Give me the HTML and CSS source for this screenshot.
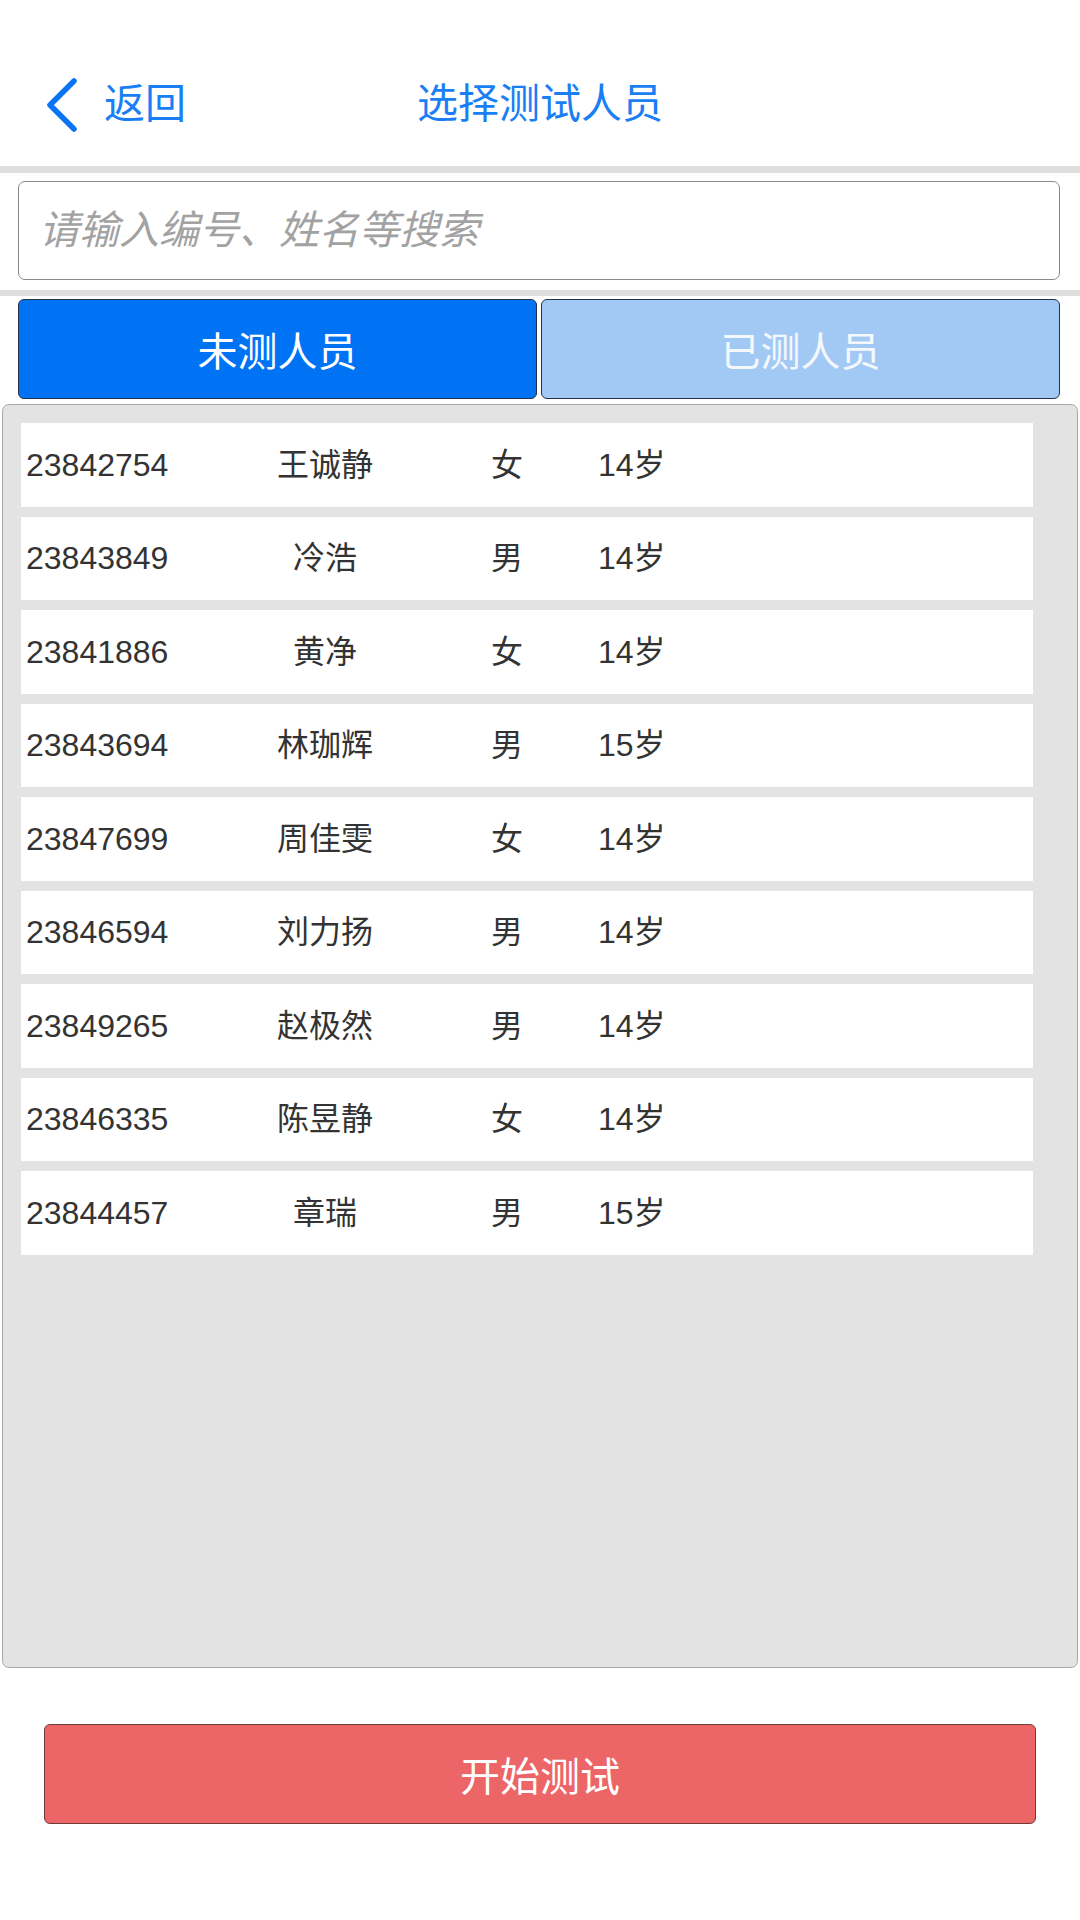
FILE: index.html
```html
<!DOCTYPE html>
<html lang="zh">
<head>
<meta charset="utf-8">
<title>选择测试人员</title>
<link rel="stylesheet" href="styles.css">
</head>
<body>
<div class="page">
  <header class="header">
    <div class="back">
      <svg class="chevron" width="32" height="54" viewBox="0 0 32 54"><polyline points="28,3 4,27 28,51" fill="none" stroke="#0a74f2" stroke-width="5.5" stroke-linecap="round" stroke-linejoin="round"/></svg>
      <span class="back-text">返回</span>
    </div>
    <div class="title">选择测试人员</div>
    <div></div>
  </header>
  <div class="sep sep-top"></div>
  <div class="search-wrap">
    <input class="search" type="text" placeholder="请输入编号、姓名等搜索">
  </div>
  <div class="sep sep-mid"></div>
  <div class="tabs">
    <div class="tab tab-active">未测人员</div>
    <div class="tab tab-inactive">已测人员</div>
  </div>
  <div class="list">
    <div class="row"><span class="c-id">23842754</span><span class="c-name">王诚静</span><span class="c-sex">女</span><span class="c-age">14岁</span></div>
    <div class="row"><span class="c-id">23843849</span><span class="c-name">冷浩</span><span class="c-sex">男</span><span class="c-age">14岁</span></div>
    <div class="row"><span class="c-id">23841886</span><span class="c-name">黄净</span><span class="c-sex">女</span><span class="c-age">14岁</span></div>
    <div class="row"><span class="c-id">23843694</span><span class="c-name">林珈辉</span><span class="c-sex">男</span><span class="c-age">15岁</span></div>
    <div class="row"><span class="c-id">23847699</span><span class="c-name">周佳雯</span><span class="c-sex">女</span><span class="c-age">14岁</span></div>
    <div class="row"><span class="c-id">23846594</span><span class="c-name">刘力扬</span><span class="c-sex">男</span><span class="c-age">14岁</span></div>
    <div class="row"><span class="c-id">23849265</span><span class="c-name">赵极然</span><span class="c-sex">男</span><span class="c-age">14岁</span></div>
    <div class="row"><span class="c-id">23846335</span><span class="c-name">陈昱静</span><span class="c-sex">女</span><span class="c-age">14岁</span></div>
    <div class="row"><span class="c-id">23844457</span><span class="c-name">章瑞</span><span class="c-sex">男</span><span class="c-age">15岁</span></div>
  </div>
  <div class="footer">
    <div class="start-btn">开始测试</div>
  </div>
</div>
</body>
</html>
```

FILE: styles.css
```css
html, body {
  margin: 0;
  padding: 0;
  background: #ffffff;
}
body {
  font-family: "Liberation Sans", "Noto Sans CJK SC", sans-serif;
  color: #333333;
}
.page {
  width: 1080px;
  height: 1920px;
  display: flex;
  flex-direction: column;
  box-sizing: border-box;
}
.header {
  height: 166px;
  box-sizing: border-box;
  padding-top: 43px;
  display: grid;
  grid-template-columns: 1fr auto 1fr;
  align-items: center;
}
.back {
  display: flex;
  align-items: center;
  padding-left: 46px;
}
.chevron {
  display: block;
}
.back-text {
  margin-left: 26px;
  font-size: 41px;
  color: #1a7ef4;
  line-height: 1;
}
.title {
  font-size: 41px;
  color: #1a7ef4;
  line-height: 1;
}
.sep {
  background: #dedede;
}
.sep-top {
  height: 7px;
}
.sep-mid {
  height: 6px;
}
.search-wrap {
  padding: 8px 20px 10px 18px;
}
.search {
  display: block;
  width: 100%;
  height: 99px;
  box-sizing: border-box;
  border: 1.5px solid #8a8a8a;
  border-radius: 7px;
  padding: 0 0 0 20px;
  font-family: "Liberation Sans", "Noto Sans CJK SC", sans-serif;
  font-size: 40px;
  color: #333333;
  background: #ffffff;
  outline: none;
}
.search::placeholder {
  color: #a2a2a2;
  font-style: italic;
}
.tabs {
  display: flex;
  gap: 4px;
  padding: 3px 20px 0 18px;
}
.tab {
  flex: 1;
  height: 100px;
  box-sizing: border-box;
  border: 1.5px solid #233247;
  border-radius: 6px;
  display: flex;
  align-items: center;
  justify-content: center;
  font-size: 40px;
  color: #ffffff;
}
.tab-active {
  background: #0073f5;
}
.tab-inactive {
  background: #a2c9f4;
  color: #f4f8fd;
}
.list {
  margin: 5px 2px 0 2px;
  height: 1264px;
  box-sizing: border-box;
  background: #e3e3e3;
  border: 1.5px solid #a8a8a8;
  border-radius: 7px;
  padding: 18px 44px 0 18px;
  display: flex;
  flex-direction: column;
  gap: 10px;
}
.row {
  height: 83.5px;
  background: #ffffff;
  display: grid;
  grid-template-columns: 219px 160px 204px 1fr;
  align-items: center;
  padding-left: 5px;
  font-size: 32px;
  line-height: 40px;
  color: #333333;
}
.c-name, .c-sex {
  text-align: center;
}
.c-age {
  margin-left: -11px;
}
.footer {
  padding: 56px 44px 0 44px;
}
.start-btn {
  height: 100px;
  box-sizing: border-box;
  background: #ed6667;
  border: 1.5px solid #6e3b3b;
  border-radius: 6px;
  display: flex;
  align-items: center;
  justify-content: center;
  font-size: 40px;
  color: #ffffff;
}
```
